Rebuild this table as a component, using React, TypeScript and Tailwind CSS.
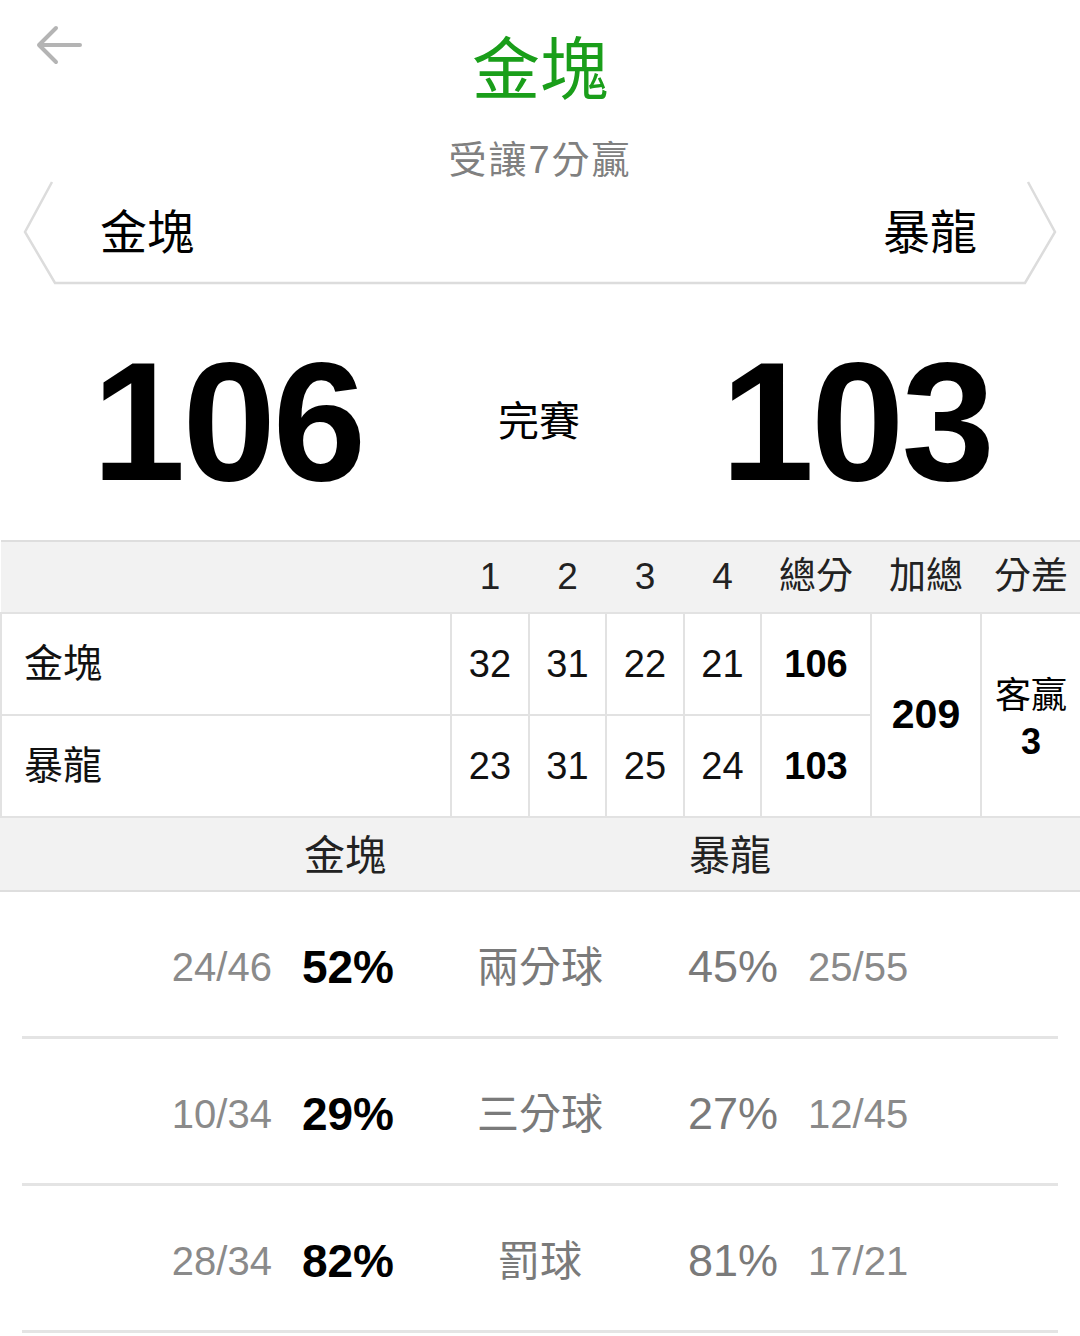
import React from "react";

const font = "font-['Liberation_Sans','Noto_Sans_CJK_TC',sans-serif]";

const quarters = [
  { team: "金塊", q: [32, 31, 22, 21], total: 106 },
  { team: "暴龍", q: [23, 31, 25, 24], total: 103 },
];

const stats = [
  { lf: "24/46", lp: "52%", label: "兩分球", rp: "45%", rf: "25/55" },
  { lf: "10/34", lp: "29%", label: "三分球", rp: "27%", rf: "12/45" },
  { lf: "28/34", lp: "82%", label: "罰球", rp: "81%", rf: "17/21" },
];

function BackArrow() {
  return (
    <svg width="48" height="40" viewBox="0 0 48 40" fill="none">
      <path d="M4 20H45M21 3L4 20L21 37" stroke="#b4b4b4" strokeWidth="4" strokeLinecap="round" strokeLinejoin="round" />
    </svg>
  );
}

export default function App() {
  return (
    <div className={`w-[1080px] h-[1336px] bg-white overflow-hidden ${font}`}>
      {/* header */}
      <div className="relative h-[122px] flex items-center justify-center">
        <div className="absolute left-[35px] top-[25px]">
          <BackArrow />
        </div>
        <span className="text-[68px] leading-none text-[#1a9e1a] mt-[18px]">金塊</span>
      </div>
      <div className="h-[58px] flex items-center justify-center text-[38px] leading-none text-[#808080] tracking-[2px] pt-[18px]">
        受讓7分贏
      </div>

      {/* teams banner */}
      <div className="relative h-[106px] mx-[22px]">
        <svg className="absolute inset-0" width="1036" height="106" viewBox="0 0 1036 106" fill="none">
          <path d="M30 2L3 52L33 103H1003L1033 52L1006 2" stroke="#dcdcdc" strokeWidth="2.5" />
        </svg>
        <div className="relative h-full flex items-center justify-between pl-[78px] pr-[81px] pb-[2px]">
          <span className="text-[47px] leading-none text-black">金塊</span>
          <span className="text-[47px] leading-none text-black">暴龍</span>
        </div>
      </div>

      {/* score */}
      <div className="h-[254px] flex items-center justify-between pl-[92px] pr-[88px] pt-[18px]">
        <span className="text-[168px] font-bold leading-none text-black tracking-[-3px]">106</span>
        <span className="text-[41px] leading-none text-black -ml-[6px]">完賽</span>
        <span className="text-[168px] font-bold leading-none text-black tracking-[-3px]">103</span>
      </div>

      {/* box score */}
      <table className="w-[1080px] border-collapse table-fixed">
        <colgroup>
          <col className="w-[450px]" />
          <col className="w-[78px]" />
          <col className="w-[77px]" />
          <col className="w-[78px]" />
          <col className="w-[77px]" />
          <col className="w-[110px]" />
          <col className="w-[110px]" />
          <col className="w-[100px]" />
        </colgroup>
        <thead>
          <tr className="h-[72px] bg-[#f2f2f2] border-y-2 border-[#dedede] text-[37px] text-[#222]">
            <th />
            {["1", "2", "3", "4"].map((h) => (
              <th key={h} className="font-normal text-center">{h}</th>
            ))}
            <th className="font-normal text-center">總分</th>
            <th className="font-normal text-center">加總</th>
            <th className="font-normal text-center">分差</th>
          </tr>
        </thead>
        <tbody>
          {quarters.map((r, i) => (
            <tr key={r.team} className="h-[102px] text-[38px] text-[#111]">
              <td className="border-2 border-[#e2e2e2] pl-[22px] text-[39px]">{r.team}</td>
              {r.q.map((v, j) => (
                <td key={j} className="border-2 border-[#e2e2e2] text-center">{v}</td>
              ))}
              <td className="border-2 border-[#e2e2e2] text-center font-bold text-black">{r.total}</td>
              {i === 0 && (
                <>
                  <td rowSpan={2} className="border-2 border-[#e2e2e2] text-center text-[41px] font-bold text-black">209</td>
                  <td rowSpan={2} className="border-2 border-[#e2e2e2] text-center text-[36px] leading-[46px] text-black pt-[8px]">
                    客贏
                    <br />
                    <span className="font-bold">3</span>
                  </td>
                </>
              )}
            </tr>
          ))}
        </tbody>
      </table>
      <div className="h-[74px] bg-[#f2f2f2] border-b-2 border-[#dedede] flex items-center text-[41px] text-[#222] pt-[6px]">
        <div className="w-[420px] flex justify-end pr-[20px]">
          <span className="w-[110px] text-center">金塊</span>
        </div>
        <div className="w-[240px]" />
        <div className="ml-[20px]">
          <span className="inline-block w-[100px] text-center">暴龍</span>
        </div>
      </div>

      {/* shooting stats */}
      {stats.map((s) => (
        <div key={s.label} className="mx-[22px] h-[147px] border-b-[3px] border-[#e4e4e4] flex items-center pt-[6px]">
          <div className="w-[398px] flex items-center justify-end gap-[30px] pr-[26px]">
            <span className="text-[40px] text-[#8a8a8a]">{s.lf}</span>
            <span className="text-[46px] font-bold text-black">{s.lp}</span>
          </div>
          <div className="w-[240px] text-center text-[42px] text-[#7a7a7a]">{s.label}</div>
          <div className="flex items-center gap-[30px] pl-[28px]">
            <span className="text-[45px] text-[#7a7a7a]">{s.rp}</span>
            <span className="text-[40px] text-[#8a8a8a]">{s.rf}</span>
          </div>
        </div>
      ))}
    </div>
  );
}
